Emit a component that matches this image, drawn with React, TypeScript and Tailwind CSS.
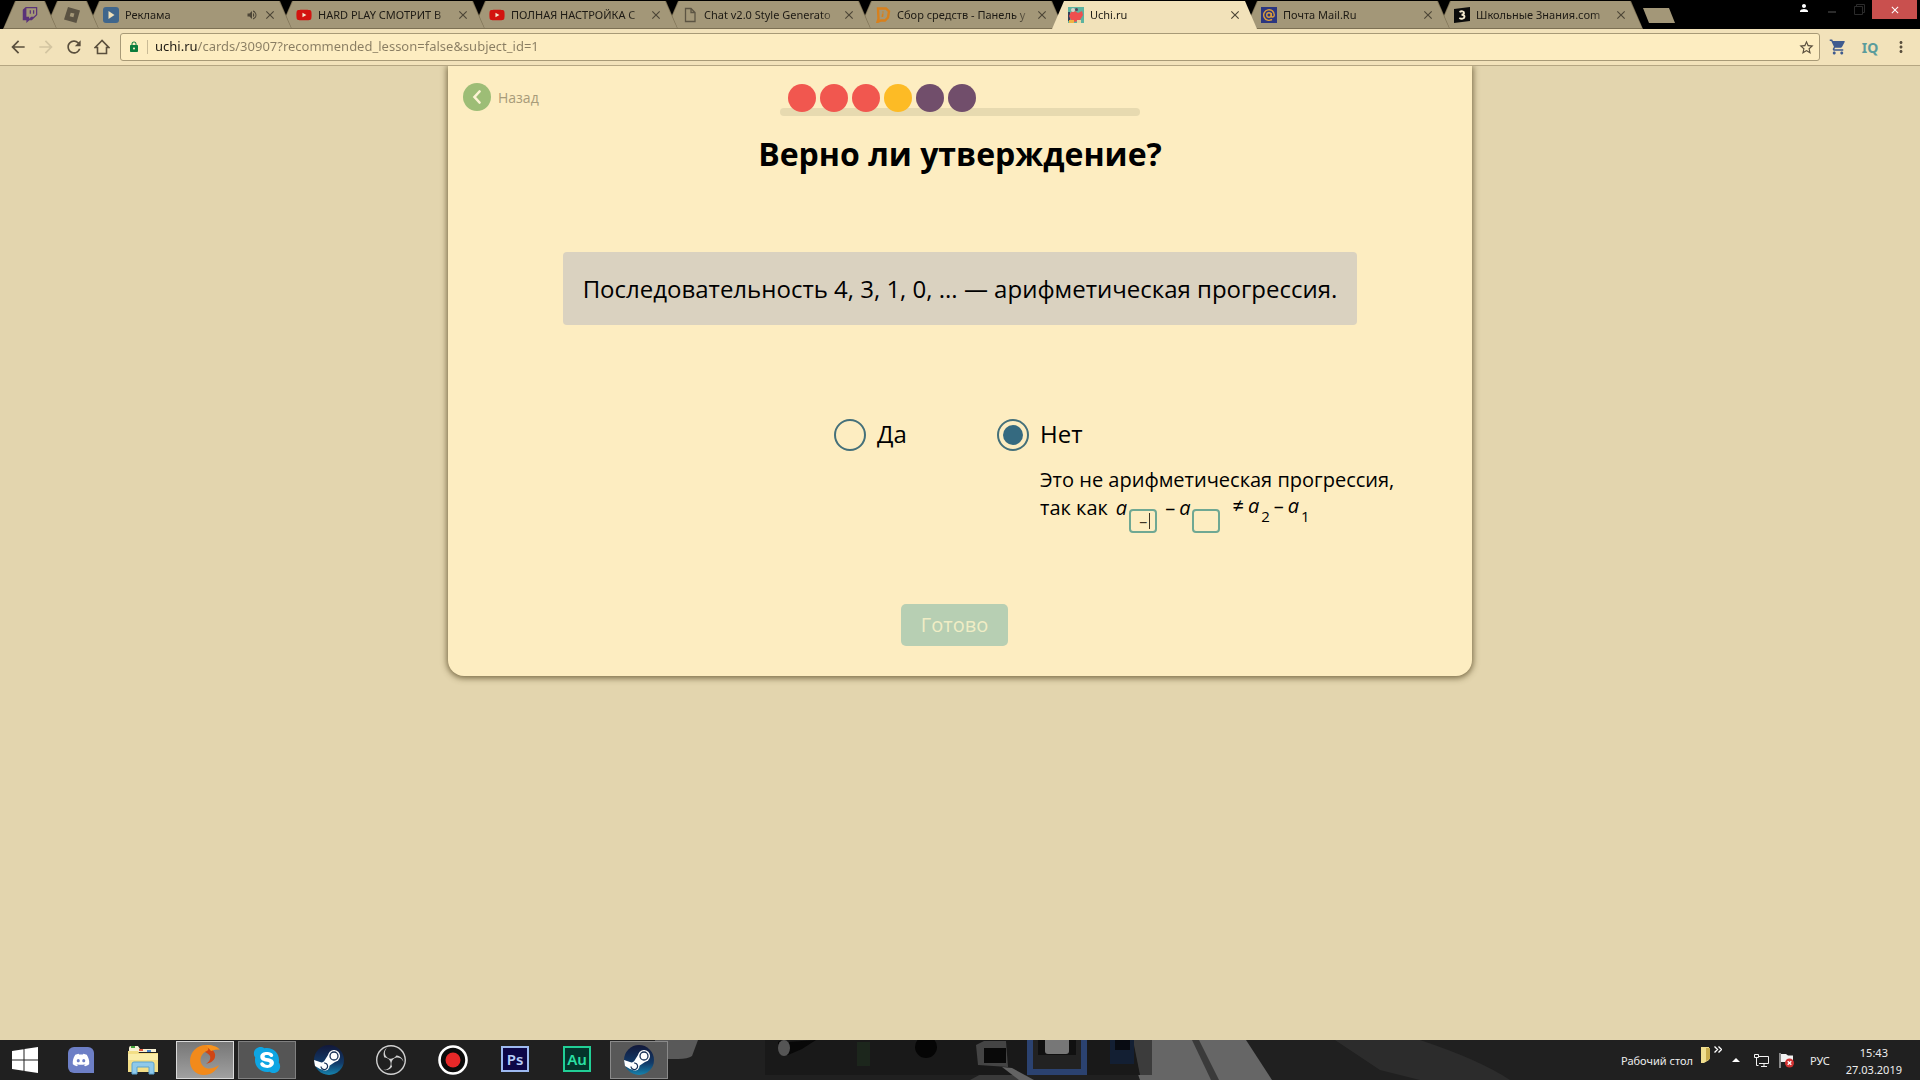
import React, { useState } from "react";
import { FaDiscord, FaSkype, FaTwitch, FaYoutube } from "react-icons/fa";
import {
  MdArrowBack,
  MdArrowForward,
  MdClose,
  MdLock,
  MdMoreVert,
  MdPerson,
  MdRefresh,
  MdShoppingCart,
  MdStarBorder,
  MdVolumeUp,
} from "react-icons/md";
import { SiObsstudio } from "react-icons/si";

interface TabItem {
  title: string;
  icon: React.ReactNode;
  layer: string;
  pinned?: boolean;
  active?: boolean;
  muted?: boolean;
}

const RobloxIcon = () => (
  <svg viewBox="0 0 16 16" className="h-4 w-4">
    <path d="M4 0 16 3.4 12.400 16 0 12.500Z" fill="#5a5242" />
    <path d="M6.700 5.700 10.400 6.600 9.400 10.200 5.700 9.300Z" fill="#a39778" />
  </svg>
);

const PlayIcon = () => (
  <svg viewBox="0 0 16 16" className="h-4 w-4">
    <rect width="16" height="16" rx="3" fill="#3f668c" />
    <path d="M5.500 4v8l6-4Z" fill="#efe0b9" />
  </svg>
);

const PageIcon = () => (
  <svg viewBox="0 0 16 16" className="h-4 w-4" fill="none" stroke="#5c5443" strokeWidth="1.300">
    <path d="M3.500 1.500h5.500l4 4v9h-9.500ZM9 1.500v4h4" />
  </svg>
);

const DonateIcon = () => (
  <svg viewBox="0 0 16 16" className="h-4 w-4" fill="none" stroke="#d8801c" strokeWidth="2.400">
    <path d="M3 1.500h8l3 3-1 6-3 3H6l-3.500 1.500 1-3Z" />
    <path d="M8 4.500v1M7.800 6.500 7.300 10" strokeWidth="1.700" />
  </svg>
);

const UchiIcon = () => (
  <svg viewBox="0 0 16 16" className="h-4 w-4">
    <rect width="16" height="16" fill="#5db3a0" />
    <path d="M0 5h2v9H0Z" fill="#35405b" />
    <path d="M1 9 3 5l4-1 3 2 4-2 1 4-3 5-5 2-4-2Z" fill="#ee4f4f" />
    <circle cx="5" cy="3" r="2" fill="#d8d3c8" />
    <circle cx="8.500" cy="2.500" r="1.500" fill="#594256" />
    <path d="M1 13h5v3H1Z" fill="#f1b341" />
    <path d="M9 13h4v3H9Z" fill="#e7d9a6" />
  </svg>
);

const MailIcon = () => (
  <svg viewBox="0 0 16 16" className="h-4 w-4" fill="none" stroke="#d99c3c" strokeWidth="1.400">
    <rect width="16" height="16" fill="#2b3680" stroke="none" />
    <circle cx="8" cy="8" r="2.300" />
    <path d="M10.300 6v2.700c0 2.200 3 1.600 3-.7A5.300 5.300 0 1 0 11 12.400" />
  </svg>
);

const ZnanijaIcon = () => (
  <svg viewBox="0 0 16 16" className="h-4 w-4">
    <path d="M0 2 16 0v14L0 16Z" fill="#0b0b0b" />
    <path d="M5.500 5c2-1.200 4.500-.8 4.500 1 0 1.200-1 1.700-2.500 1.700 2 0 3 .6 3 2 0 2-3 2.600-5.200 1.300" fill="none" stroke="#f4ead0" strokeWidth="1.900" />
  </svg>
);

const YoutubeIcon = () => (
  <span className="relative flex h-4 w-4 items-center justify-center">
    <span className="absolute h-2 w-2 bg-[#f4ead0]" />
    <FaYoutube className="relative h-4 w-4 text-[#d3130f]" />
  </span>
);

const tabs: TabItem[] = [
  { title: "Twitch", icon: <FaTwitch className="h-4 w-4 text-[#5a3279]" />, layer: "z-[9]", pinned: true },
  { title: "Roblox", icon: <RobloxIcon />, layer: "z-[8]", pinned: true },
  { title: "Реклама", icon: <PlayIcon />, layer: "z-[7]", muted: true },
  { title: "HARD PLAY СМОТРИТ В", icon: <YoutubeIcon />, layer: "z-[6]" },
  { title: "ПОЛНАЯ НАСТРОЙКА С", icon: <YoutubeIcon />, layer: "z-[5]" },
  { title: "Chat v2.0 Style Generato", icon: <PageIcon />, layer: "z-[4]" },
  { title: "Сбор средств - Панель у", icon: <DonateIcon />, layer: "z-[3]" },
  { title: "Uchi.ru", icon: <UchiIcon />, layer: "z-[10]", active: true },
  { title: "Почта Mail.Ru", icon: <MailIcon />, layer: "z-[2]" },
  { title: "Школьные Знания.com", icon: <ZnanijaIcon />, layer: "z-[1]" },
];

const Tab = ({ tab }: { tab: TabItem }) => (
  <div className={`relative -mr-3 h-7 shrink-0 ${tab.pinned ? "w-[54px]" : "w-[205px]"} ${tab.layer}`}>
    <div
      className={`absolute inset-0 [clip-path:polygon(12px_0,calc(100%-12px)_0,100%_100%,0_100%)] ${
        tab.active ? "bg-[#f2e2ba]" : "bg-[#7d7154]"
      }`}
    />
    {!tab.active && (
      <div className="absolute inset-x-px top-0 bottom-px bg-[#a39778] [clip-path:polygon(12px_0,calc(100%-12px)_0,100%_100%,0_100%)]" />
    )}
    {tab.pinned ? (
      <button aria-label={tab.title} className="relative flex h-full w-full items-center justify-center">
        {tab.icon}
      </button>
    ) : (
      <div className="relative flex h-full items-center pr-3.5 pl-4">
        {tab.icon}
        <button className="ml-1.5 min-w-0 flex-1 overflow-hidden text-left text-[11px] whitespace-nowrap text-[#1d1a14] [mask-image:linear-gradient(to_right,#000_calc(100%-20px),transparent)]">
          {tab.title}
        </button>
        {tab.muted && <MdVolumeUp className="mr-1 h-3 w-3 text-[#4d4637]" />}
        <button aria-label="Закрыть вкладку" className="flex h-4 w-4 items-center justify-center">
          <MdClose className="h-3.5 w-3.5 text-[#4d4637]" />
        </button>
      </div>
    )}
  </div>
);

const TabStrip = () => (
  <div className="flex h-[29px] bg-black">
    <div className="flex min-w-0 flex-1 pt-px pl-[3px]">
      {tabs.map((tab) => (
        <Tab key={tab.title} tab={tab} />
      ))}
      <button
        aria-label="Новая вкладка"
        className="mt-[7px] ml-3 h-[15px] w-8 shrink-0 bg-[#a39778] [clip-path:polygon(0_0,26px_0,100%_100%,6px_100%)]"
      />
    </div>
    <div className="flex items-start pr-[3px]">
      <button aria-label="Профиль" className="flex w-7 justify-center pt-0.5">
        <MdPerson className="h-3 w-3 text-white" />
      </button>
      <button aria-label="Свернуть" className="flex w-7 justify-center pt-[11px]">
        <span className="h-0.5 w-2 bg-[#2b2b2b]" />
      </button>
      <button aria-label="Развернуть" className="flex w-[26px] justify-center pt-1">
        <svg viewBox="0 0 11 11" className="h-[11px] w-[11px]" fill="none" stroke="#2b2b2b">
          <path d="M.5 2.500h8v8h-8ZM2.500 2.500v-2h8v8h-2" />
        </svg>
      </button>
      <button aria-label="Закрыть" className="flex h-[19px] w-[45px] items-center justify-center bg-[#c9504e]">
        <MdClose className="h-3 w-3 text-white" />
      </button>
    </div>
  </div>
);

const Toolbar = () => (
  <div className="flex h-[37px] items-center border-b border-[#b5a682] bg-[#f2e2ba] pl-1 text-[#5a4f3d]">
    <button aria-label="Назад" className="flex w-7 justify-center">
      <MdArrowBack className="h-5 w-5" />
    </button>
    <button aria-label="Вперёд" className="flex w-7 justify-center text-[#d3c5a1]">
      <MdArrowForward className="h-5 w-5" />
    </button>
    <button aria-label="Обновить" className="flex w-7 justify-center">
      <MdRefresh className="h-5 w-5" />
    </button>
    <button aria-label="Домой" className="flex w-7 justify-center">
      <svg viewBox="0 0 16 16" className="h-4 w-4" fill="none" stroke="currentColor" strokeWidth="1.600">
        <path d="M8 1.500 1.200 8.500h2.300v6h9v-6h2.300Z" />
      </svg>
    </button>
    <div className="ml-1 flex h-7 flex-1 items-center rounded-[3px] border border-[#a89a77] bg-[#fdedc1] pr-1 pl-[7px]">
      <MdLock className="h-3.5 w-3 text-[#0c7d3c]" />
      <span className="mx-[7px] h-3.5 w-px bg-[#c9bb96]" />
      <input
        aria-label="Адресная строка"
        defaultValue="uchi.ru/cards/30907?recommended_lesson=false&subject_id=1"
        className="min-w-0 flex-1 bg-[linear-gradient(to_right,#1f1b13_42px,#897d62_42px)] bg-clip-text text-[13px] text-transparent outline-none"
      />
      <button aria-label="В закладки">
        <MdStarBorder className="h-[17px] w-[17px]" />
      </button>
    </div>
    <button aria-label="Покупки" className="ml-1.5 flex w-6 justify-center">
      <MdShoppingCart className="h-[18px] w-[18px] text-[#3f5b8f]" />
    </button>
    <button className="ml-1 w-8 text-center text-[14px] font-bold text-[#5b9c9c]">IQ</button>
    <button aria-label="Меню" className="mr-1 flex w-[30px] justify-center">
      <MdMoreVert className="h-[18px] w-[18px]" />
    </button>
  </div>
);

const steps = [
  "bg-[#f1574f]",
  "bg-[#f1574f]",
  "bg-[#f1574f]",
  "bg-[#fdbb25]",
  "bg-[#714e6b]",
  "bg-[#714e6b]",
];

const radioClass =
  "flex h-8 w-8 appearance-none items-center justify-center rounded-full border-2 border-[#44707a] before:h-5 before:w-5 before:rounded-full checked:before:bg-[#356a80]";

const indexClass =
  "h-6 w-7 rounded border-2 border-[#6fa893] text-center text-[16px] leading-5 text-[#3c3424] outline-none";

const LessonCard = () => {
  const [answer, setAnswer] = useState("no");

  return (
    <main className="mx-auto flex w-full max-w-5xl flex-col rounded-b-2xl bg-[#fdedc1] pt-[17px] pb-[30px] font-['Open_Sans','Noto_Sans',sans-serif] text-black shadow-[0_1px_6px_1px_rgba(70,55,20,0.7)]">
      <div className="grid grid-cols-[1fr_360px_1fr] items-start px-[15px]">
        <a href="#back" className="flex items-center gap-[7px] text-[14px] text-[#a79b7a]">
          <span className="flex h-7 w-7 items-center justify-center rounded-full bg-[#9dbd76]">
            <svg viewBox="0 0 10 14" className="h-3.5 w-2.5" fill="none" stroke="#fdf3d4" strokeWidth="2.600" strokeLinecap="round">
              <path d="M7.500 1.500 2.500 7l5 5.500" />
            </svg>
          </span>
          Назад
        </a>
        <div className="flex flex-col pt-px">
          <div className="relative flex gap-1 pl-2">
            {steps.map((color, i) => (
              <span key={i} className={`h-7 w-7 rounded-full ${color}`} />
            ))}
          </div>
          <div className="-mt-1 h-2 rounded bg-[#e7dab0]" />
        </div>
      </div>

      <h1 className="mt-4 text-center text-[32px] leading-[44px] font-bold">Верно ли утверждение?</h1>

      <p className="mt-[76px] self-center rounded bg-[#dad2c0] p-5 text-[24px] leading-[33px]">
        Последовательность 4, 3, 1, 0, ... — арифметическая прогрессия.
      </p>

      <div className="mt-[94px] ml-[386px] flex items-start">
        <label className="flex w-[163px] items-start gap-[11px] text-[24px] leading-[30px]">
          <input type="radio" name="answer" checked={answer === "yes"} onChange={() => setAnswer("yes")} className={radioClass} />
          Да
        </label>
        <div>
          <label className="flex items-start gap-[11px] text-[24px] leading-[30px]">
            <input type="radio" name="answer" checked={answer === "no"} onChange={() => setAnswer("no")} className={radioClass} />
            Нет
          </label>
          <div className="mt-[15px] ml-[43px] text-[20px] leading-7">
            <p>Это не арифметическая прогрессия,</p>
            <div className="flex h-10 items-start">
              <span>так как</span>
              <i className="ml-2">a</i>
              <span className="relative mt-[15px] ml-0.5 flex">
                <input aria-label="Первый индекс" defaultValue="–" className={indexClass} />
                <span className="absolute top-1 right-[7px] h-4 w-px bg-[#3c3424]" />
              </span>
              <span className="ml-2">–</span>
              <i className="ml-1">a</i>
              <span className="mt-[15px] ml-0.5 flex">
                <input aria-label="Второй индекс" className={indexClass} />
              </span>
              <span className="-mt-0.5 ml-3">≠</span>
              <i className="-mt-0.5 ml-1">a</i>
              <span className="mt-2 ml-0.5 text-[15px]">2</span>
              <span className="-mt-0.5 ml-1">–</span>
              <i className="-mt-0.5 ml-1">a</i>
              <span className="mt-2 ml-0.5 text-[15px]">1</span>
            </div>
          </div>
        </div>
      </div>

      <button className="mt-[70px] mr-[11px] self-center rounded-[5px] bg-[#b7cfb3] px-5 text-[20px] leading-[42px] text-[#f0edc5]">
        Готово
      </button>
    </main>
  );
};

const WindowsLogo = () => (
  <svg viewBox="0 0 26 26" className="h-[26px] w-[26px]" fill="#fff">
    <path d="M0 4 11.500 2.300V12.500H0ZM12.500 2.100 26 0v12.500H12.500ZM0 13.500h11.500v10.200L0 22ZM12.500 13.500H26V26l-13.500-2.100Z" />
  </svg>
);

const ExplorerIcon = () => (
  <svg viewBox="0 0 32 30" className="h-[30px] w-8">
    <path d="M2 3q0-2 2-2h7l2 3h16v3H2Z" fill="#f8f2d4" />
    <path d="M4 1h4v2H4Z" fill="#44a33c" />
    <path d="M12 4h4v2h-4Z" fill="#e0573b" />
    <path d="M20 5h4v2h-4Z" fill="#4a86c9" />
    <path d="M1 6h10l1 2h19v19H1Z" fill="#f3de86" />
    <path d="M1 9h30v6H1Z" fill="#faeda9" />
    <path d="M5 29V19q0-2 2-2h18q2 0 2 2v10h-5v-7H10v7Z" fill="#8fc9ea" stroke="#5ba3cf" />
  </svg>
);

const UcIcon = () => (
  <svg viewBox="0 0 30 30" className="h-[30px] w-[30px]">
    <path d="M16 0C7 0 0 7 0 16c0 8 6 14 14 14 7 0 12-4 15-10-5 4-12 5-16 1-4-4-3-11 2-14 2-1 4-1 5 0 3-3 6-2 9-3-3-3-8-4-13-4Z" fill="#f28a1b" />
    <path d="M18 3c5 1 8 5 7 9-1 4-5 6-9 7 3-2 5-5 4-8-1-2-3-3-5-4 2-1 4-2 3-4Z" fill="#cf4514" />
    <path d="M16 0c7 0 12 2 14 5-3-1-6 0-9 1Z" fill="#f79420" />
  </svg>
);

const SteamIcon = () => (
  <svg viewBox="0 0 30 30" className="h-[30px] w-[30px]">
    <defs>
      <linearGradient id="steam-bg" x1="0" y1="0" x2="0" y2="1">
        <stop offset="0" stopColor="#12183a" />
        <stop offset="0.6" stopColor="#123a68" />
        <stop offset="1" stopColor="#1583ae" />
      </linearGradient>
    </defs>
    <circle cx="15" cy="15" r="15" fill="url(#steam-bg)" />
    <path d="M0 15 9 18l5-8 6-5 6 6-5 6-6 4-4 4-5-1-5-3Z" fill="#fff" />
    <circle cx="20" cy="11" r="6" fill="#fff" />
    <circle cx="20" cy="11" r="4" fill="#fff" stroke="#173056" strokeWidth="1.300" />
    <circle cx="11" cy="21" r="4.500" fill="#fff" />
    <path d="M7 21.500a3.300 3.300 0 1 0 3-3.500" fill="none" stroke="#173056" strokeWidth="1.200" />
  </svg>
);

const RecordIcon = () => (
  <svg viewBox="0 0 30 30" className="h-[30px] w-[30px]">
    <circle cx="15" cy="15" r="13.500" fill="#0b0b0b" stroke="#fff" strokeWidth="2.600" />
    <circle cx="15" cy="15" r="7.500" fill="#e62828" />
  </svg>
);

const DiscordIcon = () => (
  <span className="flex h-[26px] w-[26px] items-center justify-center rounded-t-md rounded-bl-md bg-[#6d7fc6]">
    <FaDiscord className="h-[18px] w-[18px] text-white" />
  </span>
);

const SkypeIcon = () => (
  <span className="relative flex items-center justify-center">
    <span className="absolute h-5 w-5 rounded-full bg-white" />
    <FaSkype className="relative h-[30px] w-[30px] text-[#0ea5e3]" />
  </span>
);

const apps = [
  { name: "Discord", icon: <DiscordIcon />, frame: "border-transparent" },
  { name: "Проводник", icon: <ExplorerIcon />, frame: "border-transparent" },
  { name: "UC Browser", icon: <UcIcon />, frame: "border-[#d9d9d9] bg-linear-to-b from-[#777] to-[#a0a0a0]" },
  { name: "Skype", icon: <SkypeIcon />, frame: "border-[#808080] bg-[#555]" },
  { name: "Steam", icon: <SteamIcon />, frame: "border-transparent" },
  { name: "OBS", icon: <SiObsstudio className="h-[30px] w-[30px] text-[#d2d2d2]" />, frame: "border-transparent" },
  { name: "Запись", icon: <RecordIcon />, frame: "border-transparent" },
  {
    name: "Photoshop",
    icon: <span className="mb-0.5 h-[26px] w-7 border-2 border-[#9db9f0] bg-[#0d0647] text-center text-[15px] leading-[22px] font-semibold text-[#b7cdf8]">Ps</span>,
    frame: "border-transparent",
  },
  {
    name: "Audition",
    icon: <span className="mb-0.5 h-[26px] w-7 border-2 border-[#21cf96] bg-[#04342b] text-center text-[15px] leading-[22px] font-semibold text-[#2be0a5]">Au</span>,
    frame: "border-transparent",
  },
  { name: "Steam 2", icon: <SteamIcon />, frame: "border-[#8a8a8a] bg-[#585858]" },
];

// dim wallpaper visible through the translucent taskbar
const Wallpaper = () => (
  <svg viewBox="0 0 1920 40" preserveAspectRatio="none" className="absolute inset-0 h-full w-full">
    <rect width="1920" height="40" fill="#202020" />
    <path d="M655 0h43l-6 16q-4 3-14 3h-23Z" fill="#595959" />
    <path d="M1000 24 1030 40H970Z" fill="#3a3a3a" />
    <path d="M1126 0h120l26 40H1140Z" fill="#666" />
    <path d="M1192 0h7l20 40h-8Z" fill="#3a3a3a" />
    <path d="M1335 0h85q60 20 90 40h-90l-40-10Z" fill="#2c2c2c" />
    <path d="M765 0h387v35H765Z" fill="#191919" />
    <path d="M1133 0h19v35h-12Z" fill="#3c3c3c" />
    <path d="M778 2q3-3 10 0l28-2-14 9-14 6q-10-2-10-13Z" fill="#080808" />
    <ellipse cx="784" cy="8" rx="6" ry="8" fill="#555" />
    <path d="M857 2h13v24h-13Z" fill="#1c261c" />
    <circle cx="926" cy="7" r="11" fill="#050505" />
    <path d="M976 5 984 1h22l2 26-30-2Z" fill="#444" />
    <path d="M984 8h22v15h-22Z" fill="#090909" />
    <path d="M1002 27 1012 28 1034 40h-15Z" fill="#636363" />
    <path d="M1027 0h60v35h-60Z" fill="#2b4270" />
    <path d="M1033 0h48v29h-48Z" fill="#222" />
    <path d="M1038 0h38v15h-38Z" fill="#101010" />
    <rect x="1045" y="-4" width="24" height="18" rx="3" fill="#777" />
    <path d="M1110 0h24v24h-24Z" fill="#131f33" />
    <path d="M1115 0h15v10h-15Z" fill="#080b12" />
  </svg>
);

const Taskbar = () => (
  <footer className="relative h-10 text-[11px] leading-[17px] text-[#ededed]">
    <Wallpaper />
    <div className="relative flex h-full items-center">
      <button aria-label="Пуск" className="mr-0.5 flex w-[50px] justify-center">
        <WindowsLogo />
      </button>
      <div className="flex flex-1 gap-1">
        {apps.map((app) => (
          <button
            key={app.name}
            aria-label={app.name}
            className={`flex h-[38px] w-[58px] items-center justify-center border ${app.frame}`}
          >
            {app.icon}
          </button>
        ))}
      </div>
      <div className="flex h-full items-center pr-[18px]">
        <span>Рабочий стол</span>
        <button aria-label="Панель рабочего стола" className="ml-2 flex items-start gap-1 self-start pt-1.5">
          <svg viewBox="0 0 9 17" className="h-[17px] w-[9px]">
            <path d="M0 1h8v13l-5 3H0Z" fill="#f1df8f" />
            <path d="M5 2h4v11l-4 2Z" fill="#c9ad4d" />
          </svg>
          <svg viewBox="0 0 8 7" className="h-[7px] w-2" fill="none" stroke="#fff" strokeWidth="1.400">
            <path d="M.5.500 3.500 3.500l-3 3M4.500.500 7.500 3.500l-3 3" />
          </svg>
        </button>
        <button aria-label="Скрытые значки" className="ml-2.5">
          <svg viewBox="0 0 8 4" className="h-1 w-2" fill="#fff">
            <path d="M4 0 8 4H0Z" />
          </svg>
        </button>
        <svg viewBox="0 0 15 13" className="ml-3.5 h-[13px] w-[15px]" fill="none" stroke="#f2f2f2">
          <path d="M5 2.500h9.500v7H5M.5.500h4v3h-4ZM2.500 3.500v8h2M10 9.500v3M7 12.500h6" />
        </svg>
        <svg viewBox="0 0 15 15" className="ml-2.5 h-[15px] w-[15px]">
          <path d="M.5 0h1v15h-1ZM2 1h5l2 1.500h5V9H2Z" fill="#f2f2f2" />
          <circle cx="10.500" cy="10" r="4.500" fill="#d23232" />
          <path d="m8.700 8.200 3.600 3.600m0-3.600-3.600 3.600" stroke="#fff" strokeWidth="1.300" />
        </svg>
        <button className="ml-4">РУС</button>
        <time className="ml-4 pt-0.5 text-center">
          <span className="block">15:43</span>
          <span className="block">27.03.2019</span>
        </time>
      </div>
    </div>
  </footer>
);

const App: React.FC = () => {
  return (
    <div className="flex min-h-screen flex-col bg-[#e3d5ae] font-['Noto_Sans','Open_Sans',sans-serif]">
      <div className="relative z-10">
        <TabStrip />
        <Toolbar />
      </div>
      <div className="flex-1">
        <LessonCard />
      </div>
      <Taskbar />
    </div>
  );
};

export default App;
